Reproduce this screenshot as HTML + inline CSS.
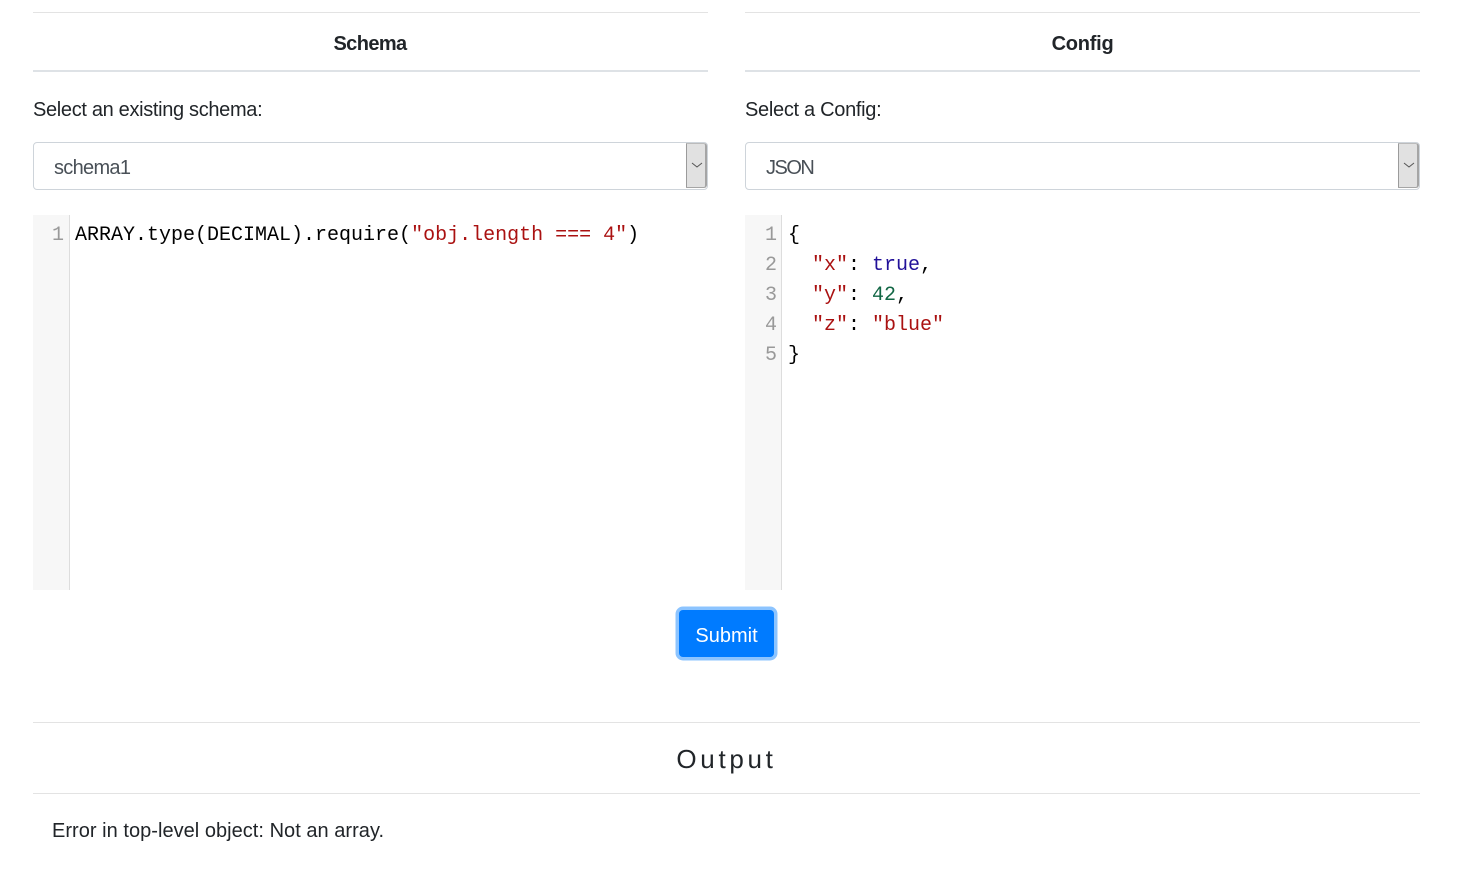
<!DOCTYPE html>
<html><head><meta charset="utf-8"><style>
html,body{margin:0;padding:0;background:#fff;width:1468px;height:876px;overflow:hidden}
body{position:relative;font-family:"Liberation Sans",sans-serif;color:#212529}
.a{position:absolute;white-space:nowrap}
.r{position:absolute}
.t{font-size:20px;line-height:30px}
.m{font-family:"Liberation Mono",monospace;font-size:20px;line-height:30px;white-space:pre;color:#000}
.n{font-family:"Liberation Mono",monospace;font-size:20px;line-height:30px;color:#999;text-align:right}
.s{color:#a11}.b{color:#219}.g{color:#164}
.sel{position:absolute;top:142px;height:46px;border:1px solid #ced4da;border-radius:4px;background:#fff;box-sizing:content-box}
.arr{position:absolute;top:143px;width:21px;height:45px;background:#e1e1e1;border-left:1px solid #9b9b9b;border-right:2px solid #a5a5a5;border-top:1px solid #bbb;border-bottom:1px solid #a5a5a5;border-radius:0 3px 3px 0;box-sizing:border-box}
</style></head><body>
<div class="r" style="left:33px;top:12px;width:675px;height:1px;background:#e3e3e3"></div>
<div class="r" style="left:745px;top:12px;width:675px;height:1px;background:#e3e3e3"></div>
<div class="r" style="left:33px;top:70px;width:675px;height:2px;background:#dee2e6"></div>
<div class="r" style="left:745px;top:70px;width:675px;height:2px;background:#dee2e6"></div>
<div class="a" style="left:33px;width:674px;top:29px;text-align:center;font-weight:bold;font-size:20px;line-height:30px;letter-spacing:-.6px">Schema</div>
<div class="a" style="left:745px;width:675px;top:29px;text-align:center;font-weight:bold;font-size:20px;line-height:30px;letter-spacing:-.25px">Config</div>
<div class="a t" style="left:33px;top:95px;letter-spacing:-.33px">Select an existing schema:</div>
<div class="a t" style="left:745px;top:95px;letter-spacing:-.3px">Select a Config:</div>

<div class="sel" style="left:33px;width:673px"></div>
<div class="a t" style="left:54px;top:153px;color:#495057;letter-spacing:-.7px">schema1</div>
<div class="arr" style="left:686px"><svg width="18" height="43" style="position:absolute;left:0;top:0"><path d="M5 19l5 4 5-4" fill="none" stroke="#555" stroke-width="1"/></svg></div>

<div class="sel" style="left:745px;width:673px"></div>
<div class="a t" style="left:766px;top:153px;color:#495057;letter-spacing:-1.5px">JSON</div>
<div class="arr" style="left:1398px"><svg width="18" height="43" style="position:absolute;left:0;top:0"><path d="M5 19l5 4 5-4" fill="none" stroke="#555" stroke-width="1"/></svg></div>

<div class="r" style="left:33px;top:215px;width:36px;height:375px;background:#f7f7f7;border-right:1px solid #ddd"></div>
<div class="r n" style="left:33px;top:221px;width:31px">1</div>
<div class="a m" style="left:75px;top:221px">ARRAY.type(DECIMAL).require(<span class="s">"obj.length === 4"</span>)</div>

<div class="r" style="left:745px;top:215px;width:36px;height:375px;background:#f7f7f7;border-right:1px solid #ddd"></div>
<div class="r n" style="left:745px;top:221px;width:32px">1<br>2<br>3<br>4<br>5</div>
<div class="a m" style="left:788px;top:221px">{
  <span class="s">"x"</span>: <span class="b">true</span>,
  <span class="s">"y"</span>: <span class="g">42</span>,
  <span class="s">"z"</span>: <span class="s">"blue"</span>
}</div>

<div class="r" style="left:679px;top:610px;width:95px;height:47px;background:#007bff;border-radius:4px;box-shadow:0 0 0 3.5px #8cc4ff"></div>
<div class="a" style="left:679px;top:621px;width:95px;text-align:center;color:#fff;font-size:20px;line-height:30px">Submit</div>

<div class="r" style="left:33px;top:722px;width:1387px;height:1px;background:#e3e3e3"></div>
<div class="a" style="left:33px;width:1387px;top:741px;text-align:center;font-size:26px;line-height:36px;letter-spacing:3.7px">Output</div>
<div class="r" style="left:33px;top:793px;width:1387px;height:1px;background:#e3e3e3"></div>
<div class="a t" style="left:52px;top:816px;letter-spacing:.03px">Error in top-level object: Not an array.</div>
</body></html>
